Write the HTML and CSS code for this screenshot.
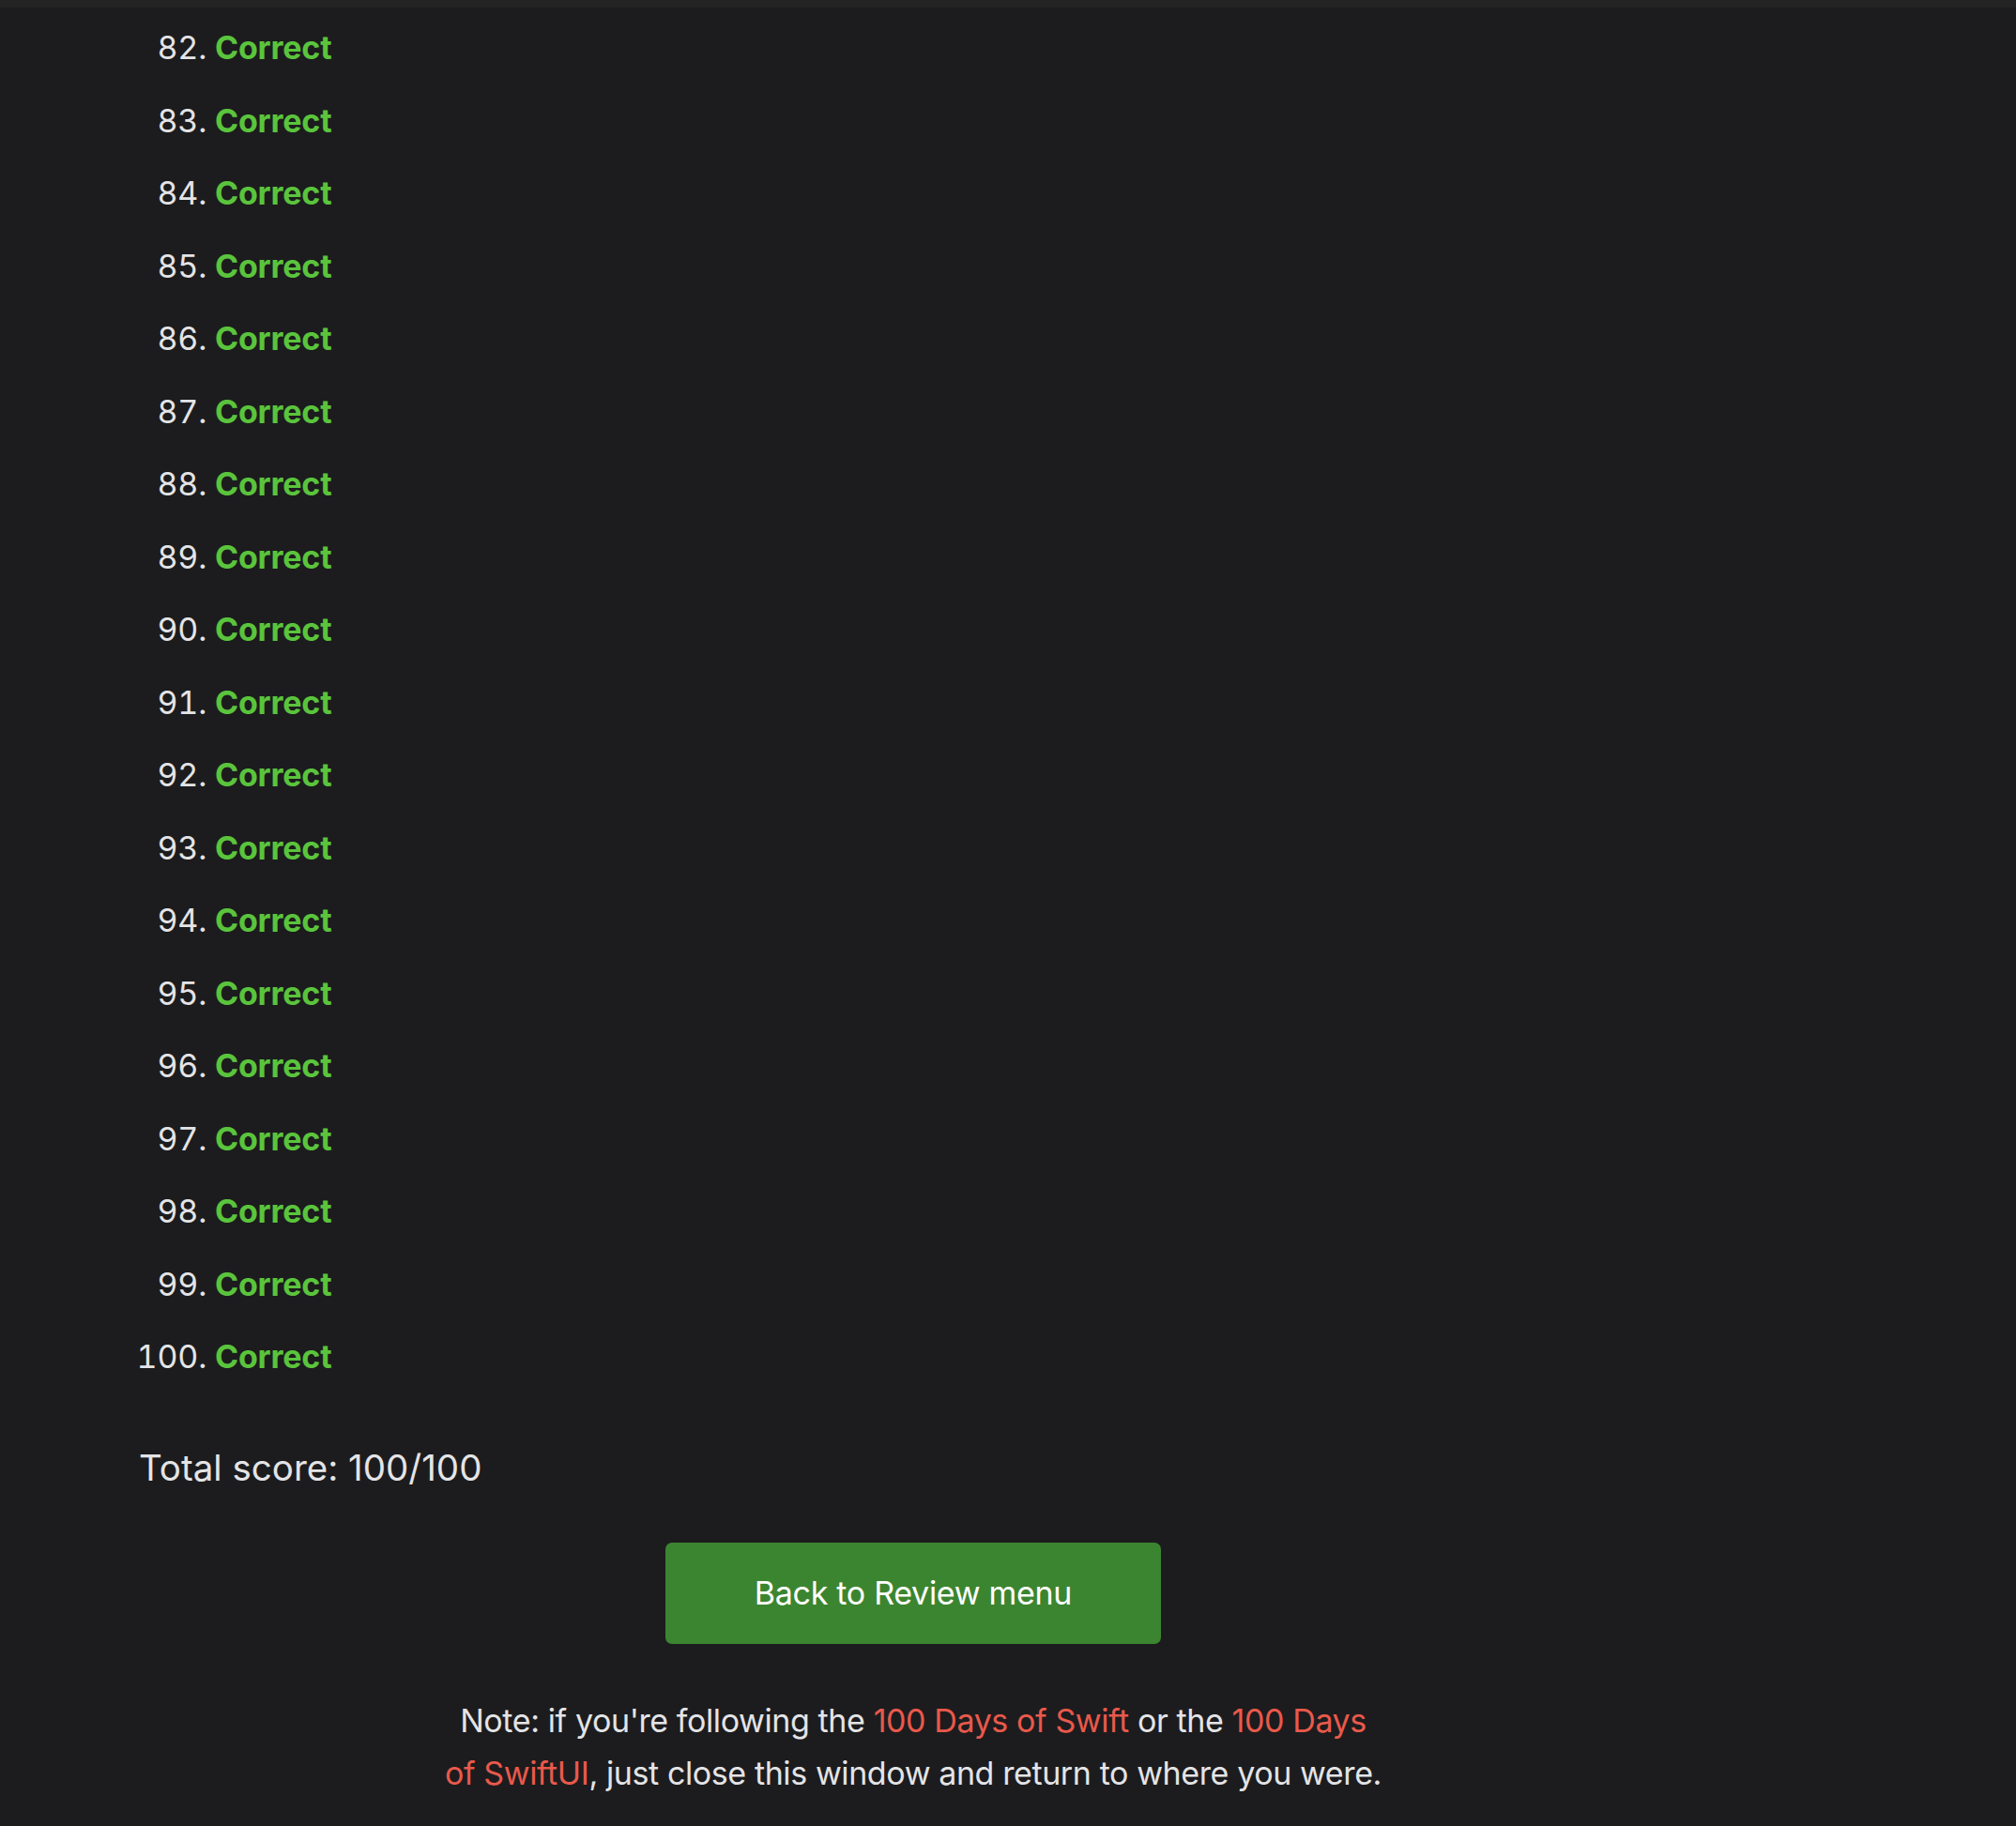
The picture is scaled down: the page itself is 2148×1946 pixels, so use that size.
FILE: index.html
```html
<!DOCTYPE html>
<html lang="en">
<head>
<meta charset="utf-8">
<title>Review results</title>
<link rel="stylesheet" href="styles.css">
</head>
<body>
<div class="topbar"></div>
<main class="page">
  <ol class="results" start="82">
    <li><span class="ok">Correct</span></li>
    <li><span class="ok">Correct</span></li>
    <li><span class="ok">Correct</span></li>
    <li><span class="ok">Correct</span></li>
    <li><span class="ok">Correct</span></li>
    <li><span class="ok">Correct</span></li>
    <li><span class="ok">Correct</span></li>
    <li><span class="ok">Correct</span></li>
    <li><span class="ok">Correct</span></li>
    <li><span class="ok">Correct</span></li>
    <li><span class="ok">Correct</span></li>
    <li><span class="ok">Correct</span></li>
    <li><span class="ok">Correct</span></li>
    <li><span class="ok">Correct</span></li>
    <li><span class="ok">Correct</span></li>
    <li><span class="ok">Correct</span></li>
    <li><span class="ok">Correct</span></li>
    <li><span class="ok">Correct</span></li>
    <li><span class="ok">Correct</span></li>
  </ol>
  <p class="total">Total score: 100/100</p>
  <div class="actions">
    <a class="btn" href="#">Back to Review menu</a>
  </div>
  <p class="note">Note: if you're following the <a href="#">100 Days of Swift</a> or the <a href="#">100 Days<br>of SwiftUI</a>, just close this window and return to where you were.</p>
</main>
</body>
</html>
```
FILE: styles.css
```css
html, body {
  margin: 0;
  padding: 0;
  background: #1c1c1e;
}
body {
  font-family: Inter, "Liberation Sans", sans-serif;
  color: #e4e4e6;
  font-size: 34px;
}
.topbar {
  height: 8px;
  background: #232324;
}
.page {
  margin-left: 148px;
  width: 1650px;
  padding-top: 4px;
}
.results {
  margin: 0;
  padding-left: 81px;
}
.results li {
  line-height: 77.5px;
  letter-spacing: -0.2px;
}
.ok {
  color: #5ac43c;
  font-weight: 700;
}
.total {
  margin: 56px 0 0;
  font-size: 38.5px;
  line-height: 46px;
  letter-spacing: 0;
}
.actions {
  display: flex;
  justify-content: center;
  margin-top: 57px;
}
.btn {
  display: flex;
  align-items: center;
  justify-content: center;
  width: 528px;
  height: 108px;
  background: #3c8530;
  color: #ffffff;
  border-radius: 7px;
  text-decoration: none;
  letter-spacing: -0.3px;
}
.note {
  width: 1100px;
  margin: 54px auto 0;
  text-align: center;
  line-height: 56px;
  letter-spacing: -0.4px;
}
.note a {
  color: #e9594b;
  text-decoration: none;
}
```
